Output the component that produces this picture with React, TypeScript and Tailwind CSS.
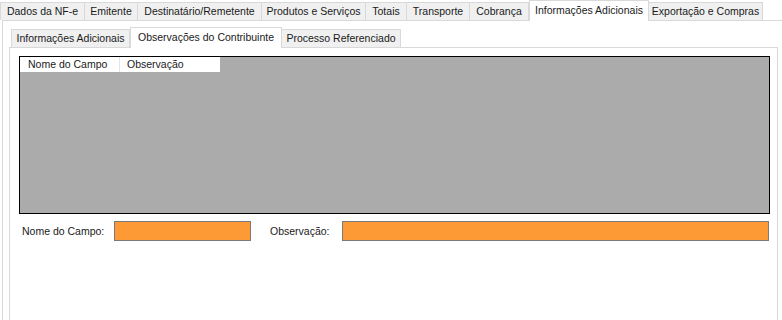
import React from 'react';

const outerTabs = [
  { label: 'Dados da NF-e', w: 85 },
  { label: 'Emitente', w: 54 },
  { label: 'Destinatário/Remetente', w: 125 },
  { label: 'Produtos e Serviços', w: 105 },
  { label: 'Totais', w: 42 },
  { label: 'Transporte', w: 64 },
  { label: 'Cobrança', w: 60 },
  { label: 'Informações Adicionais', w: 120, active: true },
  { label: 'Exportação e Compras', w: 115 },
];

const innerTabs = [
  { label: 'Informações Adicionais', w: 119 },
  { label: 'Observações do Contribuinte', w: 152, active: true },
  { label: 'Processo Referenciado', w: 120 },
];

const Tab = ({ label, w, active }: { label: string; w: number; active?: boolean }) => (
  <div
    style={{ width: w }}
    className={`flex items-center justify-center border border-b-0 border-[#d9d9d9] whitespace-nowrap shrink-0 ${
      active ? 'h-[21px] bg-white relative z-10 -mb-px pb-[2px]' : 'h-[18px] bg-[#f0f0f0] -ml-px first:ml-0'
    }`}
  >
    {label}
  </div>
);

export default function App() {
  return (
    <div className="w-[782px] h-[320px] bg-white overflow-hidden text-[10.5px] leading-none text-[#1a1a1a] font-['Liberation_Sans',Arial,sans-serif]">
      {/* outer tabs */}
      <div className="flex items-end h-[20px]">
        {outerTabs.map((t) => (
          <Tab key={t.label} {...t} />
        ))}
      </div>

      {/* outer panel */}
      <div className="ml-[2px] w-[800px] h-[300px] border-l border-t border-[#d9d9d9] pt-[6px] pl-[6px]">
        {/* inner tabs */}
        <div className="flex items-end h-[20px] pl-[2px]">
          {innerTabs.map((t) => (
            <Tab key={t.label} {...t} />
          ))}
        </div>

        {/* inner panel */}
        <div className="w-[769px] h-[290px] border border-[#d9d9d9] pt-[8px] pl-[9px]">
          <div className="w-[751px] h-[158px] bg-[#ababab] border border-black">
            <div className="flex h-[15px] w-[200px] bg-white">
              <div className="w-[100px] pl-[8px] flex items-center border-r border-[#e5e5e5]">Nome do Campo</div>
              <div className="w-[100px] pl-[7px] flex items-center">Observação</div>
            </div>
          </div>

          <div className="flex items-center mt-[7px] h-[20px]">
            <span className="ml-[3px] w-[92px]">Nome do Campo:</span>
            <div className="w-[137px] h-[20px] bg-[#fd9a36] border border-[#7a7a7a]" />
            <span className="ml-[19px] w-[72px]">Observação:</span>
            <div className="w-[427px] h-[20px] bg-[#fd9a36] border border-[#7a7a7a]" />
          </div>
        </div>
      </div>
    </div>
  );
}
